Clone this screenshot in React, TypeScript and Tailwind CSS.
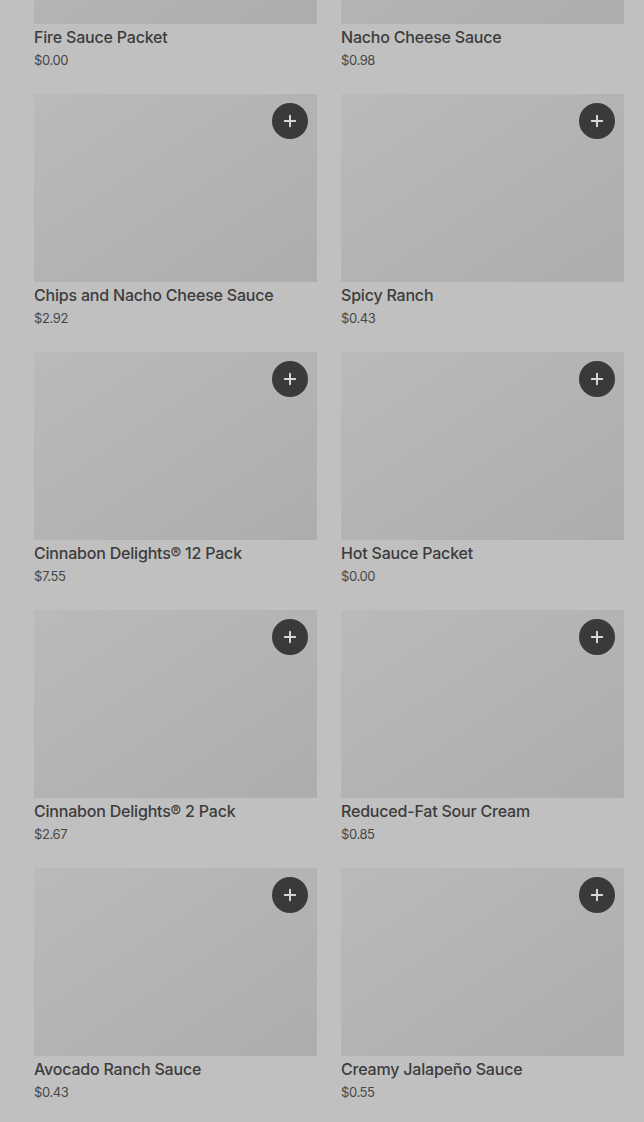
import { Plus } from "lucide-react";

const items = [
  { name: "Fire Sauce Packet", price: "$0.00" },
  { name: "Nacho Cheese Sauce", price: "$0.98" },
  { name: "Chips and Nacho Cheese Sauce", price: "$2.92" },
  { name: "Spicy Ranch", price: "$0.43" },
  { name: "Cinnabon Delights® 12 Pack", price: "$7.55" },
  { name: "Hot Sauce Packet", price: "$0.00" },
  { name: "Cinnabon Delights® 2 Pack", price: "$2.67" },
  { name: "Reduced-Fat Sour Cream", price: "$0.85" },
  { name: "Avocado Ranch Sauce", price: "$0.43" },
  { name: "Creamy Jalapeño Sauce", price: "$0.55" },
];

export default function App() {
  return (
    <div className="h-[1122px] overflow-hidden bg-[#c0c0c0] font-['Inter',sans-serif] text-[#3c3c3c]">
      <div className="mt-[-164px] grid grid-cols-[283px_283px] gap-x-6 gap-y-6 pl-[34px]">
        {items.map((item) => (
          <div key={item.name}>
            <div className="relative h-[188px] bg-gradient-to-br from-[#bababa] to-[#adadad]">
              <button className="absolute right-[9px] top-[9px] flex h-9 w-9 items-center justify-center rounded-full bg-[#3a3a3a] text-[#d8d8d8]">
                <Plus className="h-[18px] w-[18px]" strokeWidth={2.6} />
              </button>
            </div>
            <p className="mt-[3px] text-[16px] font-medium leading-5 tracking-[-0.2px]">
              {item.name}
            </p>
            <p className="mt-[3px] text-[13px] leading-5 tracking-[-0.4px] text-[#474747]">
              {item.price}
            </p>
          </div>
        ))}
      </div>
    </div>
  );
}
